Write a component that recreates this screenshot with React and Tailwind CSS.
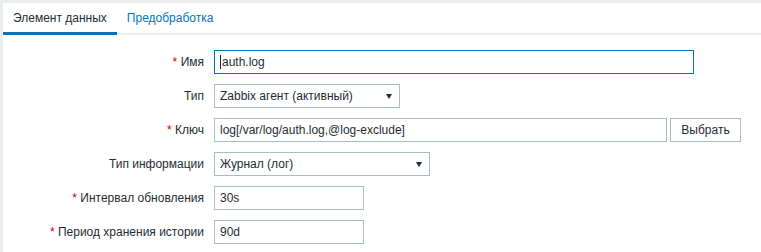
const font = "font-['Liberation_Sans',Arial,sans-serif]"

function Label({ required, children }) {
  return (
    <div className="w-[211px] shrink-0 pr-[10px] text-right">
      {required && <span className="text-[#d40000]">* </span>}
      {children}
    </div>
  )
}

function TextBox({ width, value, focused, caret }) {
  return (
    <div
      className={`h-[24px] border px-[5px] flex items-center bg-white ${
        focused ? 'border-[#0275b8]' : 'border-[#acbbc2]'
      } ${width}`}
    >
      {caret && <span className="w-px h-[14px] bg-[#1f2c33] mr-px" />}
      <span>{value}</span>
    </div>
  )
}

function Select({ width, value }) {
  return (
    <div
      className={`h-[24px] border border-[#acbbc2] pl-[5px] pr-[7px] flex items-center justify-between bg-white ${width}`}
    >
      <span>{value}</span>
      <svg width="6" height="5" viewBox="0 0 6 5" className="shrink-0">
        <path d="M0 0h6L3 5z" fill="#1f2c33" />
      </svg>
    </div>
  )
}

export default function App() {
  return (
    <div className={`min-h-screen bg-[#ebeef0] pt-[3px] pl-[3px] text-[12px] text-[#1f2c33] ${font}`}>
      <div className="bg-white h-[249px]">
        {/* Tabs */}
        <div className="flex border-b-2 border-[#ebeef0]">
          <div className="h-[32px] -mb-[2px] px-[10px] flex items-center border-b-[3px] border-[#0275b8] pt-[1px]">
            Элемент данных
          </div>
          <div className="h-[32px] -mb-[2px] px-[10px] flex items-center border-b-[3px] border-transparent pt-[1px] text-[#0275b8]">
            Предобработка
          </div>
        </div>

        {/* Form */}
        <div className="pt-[15px] flex flex-col gap-[10px]">
          <div className="flex items-center">
            <Label required>Имя</Label>
            <TextBox width="w-[480px]" value="auth.log" focused caret />
          </div>
          <div className="flex items-center">
            <Label>Тип</Label>
            <Select width="w-[186px]" value="Zabbix агент (активный)" />
          </div>
          <div className="flex items-center">
            <Label required>Ключ</Label>
            <TextBox width="w-[453px]" value="log[/var/log/auth.log,@log-exclude]" />
            <button className="ml-[3px] h-[24px] w-[71px] border border-[#acbbc2] bg-white text-[#1f2c33]">
              Выбрать
            </button>
          </div>
          <div className="flex items-center">
            <Label>Тип информации</Label>
            <Select width="w-[216px]" value="Журнал (лог)" />
          </div>
          <div className="flex items-center">
            <Label required>Интервал обновления</Label>
            <TextBox width="w-[150px]" value="30s" />
          </div>
          <div className="flex items-center">
            <Label required>Период хранения истории</Label>
            <TextBox width="w-[150px]" value="90d" />
          </div>
        </div>
      </div>
    </div>
  )
}
